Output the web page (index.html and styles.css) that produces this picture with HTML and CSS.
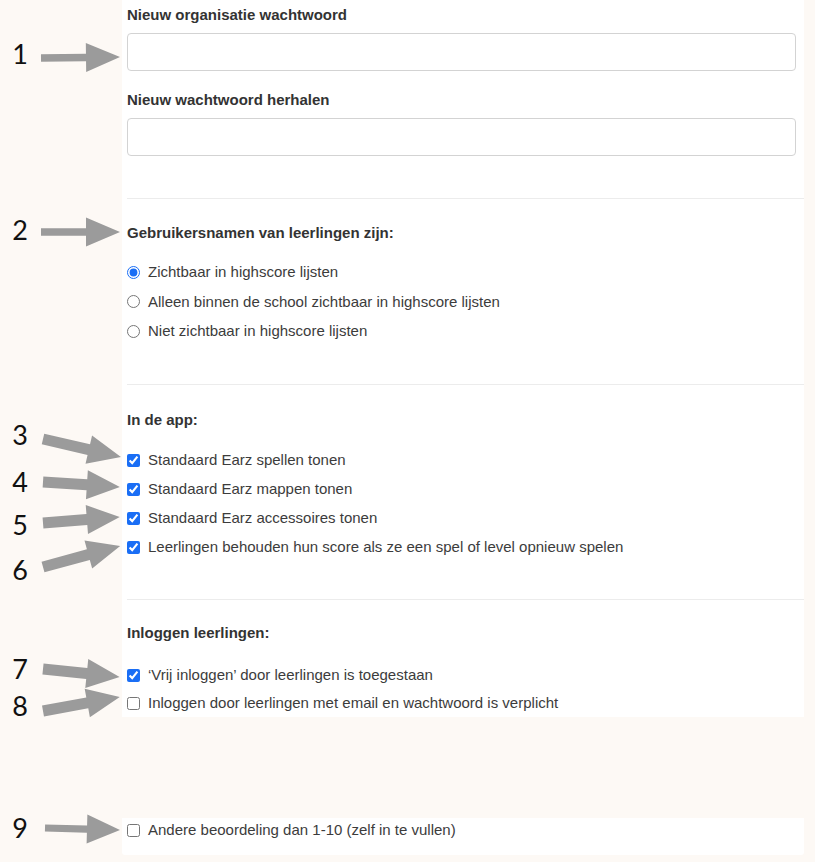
FILE: index.html
```html
<!DOCTYPE html>
<html lang="nl">
<head>
<meta charset="utf-8">
<title>Instellingen</title>
<link rel="stylesheet" href="styles.css">
</head>
<body>
<div class="page">
  <div class="panel">
    <section class="section section-first">
      <label class="field-label" for="pw1">Nieuw organisatie wachtwoord</label>
      <input class="text-input" id="pw1" type="password">
      <label class="field-label field-label-gap" for="pw2">Nieuw wachtwoord herhalen</label>
      <input class="text-input" id="pw2" type="password">
    </section>

    <section class="section section-names">
      <div class="group-title">Gebruikersnamen van leerlingen zijn:</div>
      <div class="options options-radio">
        <label class="option"><input type="radio" name="vis" checked><span>Zichtbaar in highscore lijsten</span></label>
        <label class="option"><input type="radio" name="vis"><span>Alleen binnen de school zichtbaar in highscore lijsten</span></label>
        <label class="option"><input type="radio" name="vis"><span>Niet zichtbaar in highscore lijsten</span></label>
      </div>
    </section>

    <section class="section section-app">
      <div class="group-title">In de app:</div>
      <div class="options options-app">
        <label class="option"><input type="checkbox" checked><span>Standaard Earz spellen tonen</span></label>
        <label class="option"><input type="checkbox" checked><span>Standaard Earz mappen tonen</span></label>
        <label class="option"><input type="checkbox" checked><span>Standaard Earz accessoires tonen</span></label>
        <label class="option"><input type="checkbox" checked><span>Leerlingen behouden hun score als ze een spel of level opnieuw spelen</span></label>
      </div>
    </section>

    <section class="section section-login">
      <div class="group-title">Inloggen leerlingen:</div>
      <div class="options options-login">
        <label class="option"><input type="checkbox" checked><span>‘Vrij inloggen’ door leerlingen is toegestaan</span></label>
        <label class="option"><input type="checkbox"><span>Inloggen door leerlingen met email en wachtwoord is verplicht</span></label>
      </div>
    </section>
  </div>

  <div class="panel panel-small">
    <label class="option"><input type="checkbox"><span>Andere beoordeling dan 1-10 (zelf in te vullen)</span></label>
  </div>
</div>

<div class="annotations" aria-hidden="true">
  <svg class="arrows" width="815" height="862" viewBox="0 0 815 862">
    <g fill="#9b9b9b">
      <g transform="translate(41 58) rotate(-0.7)"><polygon points="0,-3.8 45,-3.8 45,-14.5 79,0 45,14.5 45,3.8 0,3.8"/></g>
      <g transform="translate(41 232) rotate(0)"><polygon points="0,-3.8 45,-3.8 45,-14.5 79,0 45,14.5 45,3.8 0,3.8"/></g>
      <g transform="translate(43 439) rotate(13)"><polygon points="0,-5.5 47,-5.5 47,-14.5 80,0 47,14.5 47,5.5 0,5.5"/></g>
      <g transform="translate(43 482) rotate(3.7)"><polygon points="0,-5.5 44,-5.5 44,-14.5 77,0 44,14.5 44,5.5 0,5.5"/></g>
      <g transform="translate(43 523) rotate(-4.5)"><polygon points="0,-5.5 44,-5.5 44,-14.5 77,0 44,14.5 44,5.5 0,5.5"/></g>
      <g transform="translate(43 567) rotate(-15.3)"><polygon points="0,-5.5 47,-5.5 47,-14.5 80,0 47,14.5 47,5.5 0,5.5"/></g>
      <g transform="translate(43 669) rotate(5.9)"><polygon points="0,-5.5 44,-5.5 44,-14.5 77,0 44,14.5 44,5.5 0,5.5"/></g>
      <g transform="translate(43 711) rotate(-10.3)"><polygon points="0,-5.5 45,-5.5 45,-14.5 78,0 45,14.5 45,5.5 0,5.5"/></g>
      <g transform="translate(45 828) rotate(1.5)"><polygon points="0,-3.6 42,-3.6 42,-14.5 75,0 42,14.5 42,3.6 0,3.6"/></g>
    </g>
  </svg>
  <span class="num n1">1</span>
  <span class="num n2">2</span>
  <span class="num n3">3</span>
  <span class="num n4">4</span>
  <span class="num n5">5</span>
  <span class="num n6">6</span>
  <span class="num n7">7</span>
  <span class="num n8">8</span>
  <span class="num n9">9</span>
</div>
</body>
</html>
```

FILE: styles.css
```css
html, body {
  margin: 0;
  padding: 0;
}

body {
  background: #fdf9f5;
  font-family: "Liberation Sans", Arial, Helvetica, sans-serif;
  font-size: 15px;
  color: #333;
  position: relative;
  min-height: 862px;
}

.page {
  padding-left: 122px;
  width: 682px;
}

.panel {
  background: #ffffff;
  padding: 0 0 0 5px;
}

.panel-small {
  margin-top: 101px;
  padding-top: 2px;
  padding-bottom: 15px;
  border-radius: 0 0 3px 3px;
}

.section {
  display: flex;
  flex-direction: column;
  border-top: 1px solid #ececec;
}

.section-first {
  border-top: none;
  padding: 6px 0 42px;
}

.section-names {
  padding: 25px 0 43px;
}

.section-app {
  padding: 26px 0 42px;
}

.section-login {
  padding: 24px 0 4px;
}

.field-label,
.group-title {
  display: block;
  font-weight: bold;
  font-size: 15px;
  line-height: 18px;
  color: #333;
}

.field-label-gap {
  margin-top: 20px;
}

.text-input {
  display: block;
  box-sizing: border-box;
  margin: 9px 0 0;
  width: 669px;
  height: 38px;
  border: 1px solid #d3d3d3;
  border-radius: 4px;
  background: #fff;
  padding: 6px 10px;
  font: inherit;
}

.options {
  display: flex;
  flex-direction: column;
}

.options-radio {
  margin-top: 20px;
  gap: 9.5px;
}

.options-app {
  margin-top: 21px;
  gap: 9px;
}

.options-login {
  margin-top: 23px;
  gap: 8px;
}

.option {
  display: flex;
  align-items: center;
  gap: 8px;
  height: 20px;
  line-height: 20px;
  font-size: 15px;
  color: #3c3c3c;
}

.option input {
  margin: 0;
  width: 13px;
  height: 13px;
  flex: none;
  accent-color: #1a6ef5;
}

.annotations {
  position: absolute;
  left: 0;
  top: 0;
  width: 815px;
  height: 862px;
  pointer-events: none;
}

.arrows {
  position: absolute;
  left: 0;
  top: 0;
}

.num {
  position: absolute;
  left: 8px;
  width: 24px;
  text-align: center;
  font-family: Lato, "Noto Sans", sans-serif;
  font-size: 27px;
  line-height: 30px;
  color: #111;
}

.n1 { top: 39px; }
.n2 { top: 215px; }
.n3 { top: 420px; }
.n4 { top: 467px; }
.n5 { top: 510px; }
.n6 { top: 555px; }
.n7 { top: 654px; }
.n8 { top: 691px; }
.n9 { top: 813px; }
```
